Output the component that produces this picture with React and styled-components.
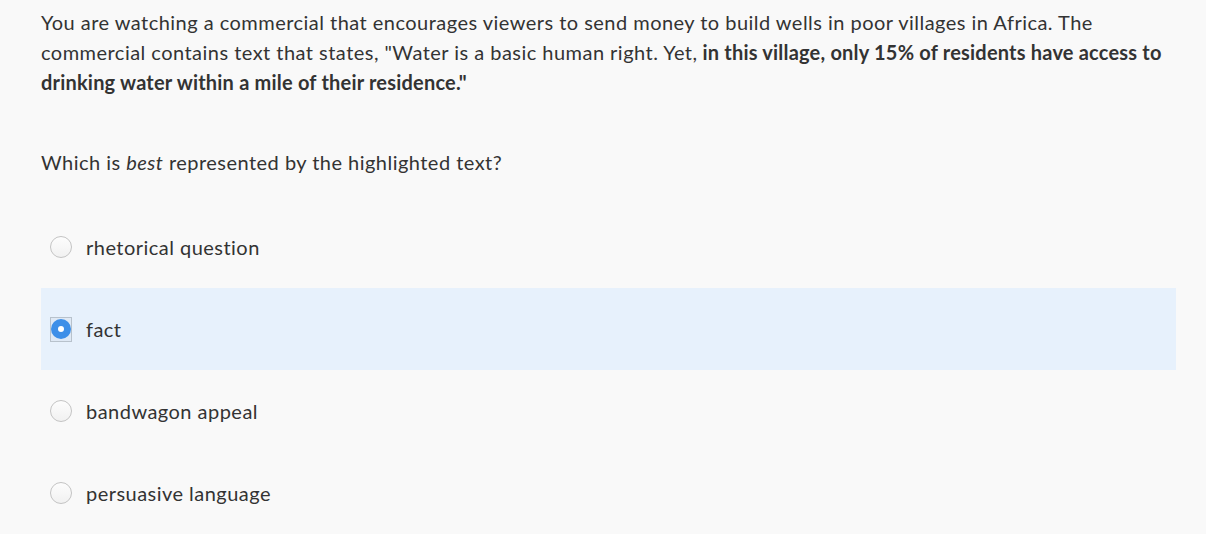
import React from "react";
import styled, { createGlobalStyle } from "styled-components";

const Global = createGlobalStyle`
  html, body { margin: 0; padding: 0; background: #f9f9f9; }
  body { font-family: "Lato", "Liberation Sans", sans-serif; color: #333; letter-spacing: 0.47px; }
`;

const Page = styled.div`
  width: 1206px;
  height: 534px;
  overflow: hidden;
  padding: 7px 0 0 41px;
  box-sizing: border-box;
`;

const Passage = styled.p`
  margin: 0;
  font-size: 20px;
  line-height: 30px;
  max-width: 1160px;
`;

const Strong = styled.b`
  font-weight: 700;
  letter-spacing: 0.2px;
  margin-left: 5px;
`;

const Question = styled.p`
  margin: 50px 0 0;
  font-size: 20px;
  line-height: 30px;
`;

const Options = styled.div`
  margin-top: 29px;
  display: flex;
  flex-direction: column;
  width: 1135px;
`;

const Row = styled.label`
  display: flex;
  align-items: center;
  gap: 14px;
  height: 82px;
  padding-left: 9px;
  font-size: 20px;
  background: ${(p) => (p.$selected ? "#e7f1fc" : "transparent")};
  cursor: pointer;
`;

const Circle = styled.span`
  width: 20px;
  height: 20px;
  border-radius: 50%;
  border: 1px solid #c4c4c4;
  background: linear-gradient(#fdfdfd, #f1f1f1);
  box-sizing: content-box;
  flex-shrink: 0;
`;

const Focus = styled.span`
  width: 20px;
  height: 23px;
  border: 1px solid #b8c2cc;
  display: flex;
  align-items: center;
  justify-content: center;
  flex-shrink: 0;
  background: #dfe9f5;
`;

const Filled = styled.span`
  width: 20px;
  height: 20px;
  border-radius: 50%;
  background: #3d8fe8;
  display: flex;
  align-items: center;
  justify-content: center;
  &::after {
    content: "";
    width: 6px;
    height: 6px;
    border-radius: 50%;
    background: #fff;
  }
`;

const options = [
  "rhetorical question",
  "fact",
  "bandwagon appeal",
  "persuasive language",
];

export default function App() {
  return (
    <Page>
      <Global />
      <Passage>
        You are watching a commercial that encourages viewers to send money to build wells in poor villages in Africa. The
        commercial contains text that states, "Water is a basic human right. Yet,<Strong>in this village, only 15% of residents have access to drinking water within a mile of their residence."</Strong>
      </Passage>
      <Question>
        Which is <i>best</i> represented by the highlighted text?
      </Question>
      <Options>
        {options.map((o, i) => (
          <Row key={o} $selected={i === 1}>
            {i === 1 ? (
              <Focus>
                <Filled />
              </Focus>
            ) : (
              <Circle />
            )}
            {o}
          </Row>
        ))}
      </Options>
    </Page>
  );
}
